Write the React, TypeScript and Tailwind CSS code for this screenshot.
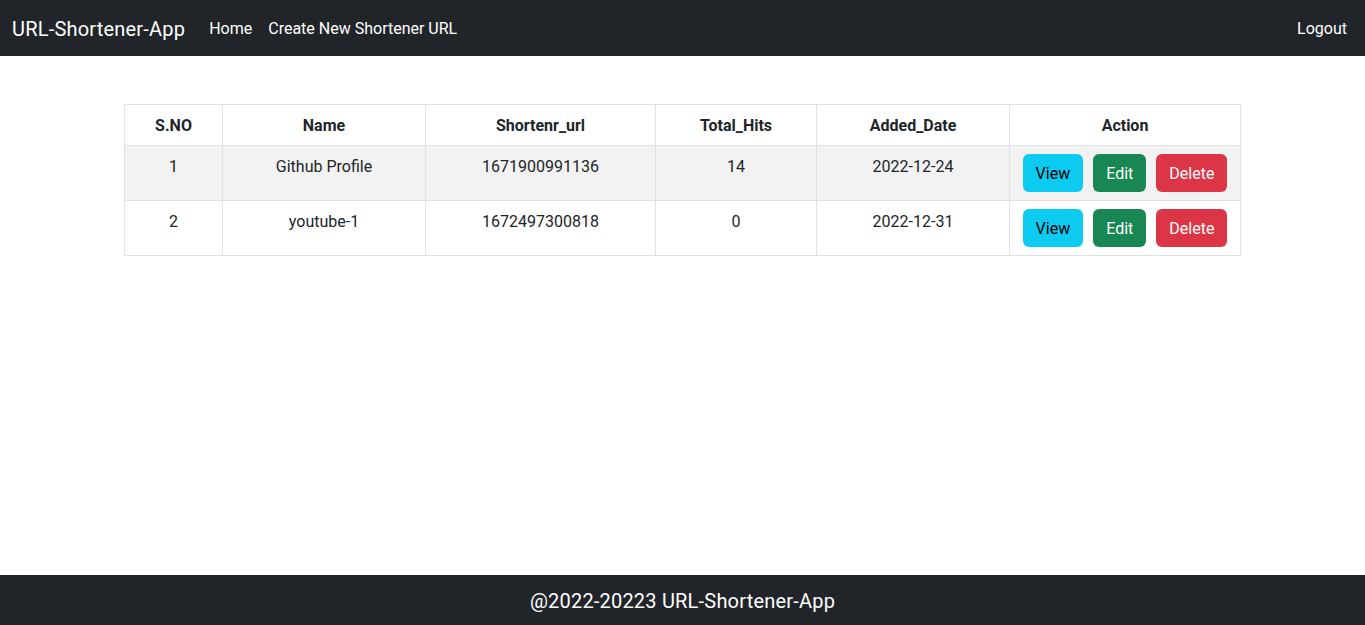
import React from "react";

const rows = [
  { sno: 1, name: "Github Profile", url: "1671900991136", hits: 14, date: "2022-12-24" },
  { sno: 2, name: "youtube-1", url: "1672497300818", hits: 0, date: "2022-12-31" },
];

const headers = [
  { label: "S.NO", w: "w-[98px]" },
  { label: "Name", w: "w-[203px]" },
  { label: "Shortenr_url", w: "w-[230px]" },
  { label: "Total_Hits", w: "w-[161px]" },
  { label: "Added_Date", w: "w-[193px]" },
  { label: "Action", w: "w-[231px]" },
];

export default function App() {
  return (
    <div className="flex min-h-[625px] flex-col bg-white font-['Roboto',sans-serif] text-[#212529]">
      {/* Navbar */}
      <nav className="flex h-14 items-center bg-[#212529] px-3 pt-0.5">
        <span className="mr-4 text-[20px] leading-[30px] tracking-[0.2px] text-white">URL-Shortener-App</span>
        <a className="px-2 text-[16px] text-white">Home</a>
        <a className="px-2 text-[16px] text-white">Create New Shortener URL</a>
        <a className="ml-auto -mr-0.5 px-2 text-[16px] text-white">Logout</a>
      </nav>

      {/* Table */}
      <main className="flex-1">
        <div className="mx-auto mt-12 w-[1141px] px-3">
          <table className="w-full table-fixed border-collapse border border-[#dee2e6] text-[16px] leading-6">
            <thead>
              <tr>
                {headers.map((h) => (
                  <th key={h.label} className={`${h.w} border border-[#dee2e6] px-2 pt-[9px] pb-[7px] text-center font-bold`}>
                    {h.label}
                  </th>
                ))}
              </tr>
            </thead>
            <tbody>
              {rows.map((r, i) => (
                <tr key={r.sno} className={i % 2 === 0 ? "bg-[#f2f2f2]" : "bg-white"}>
                  <td className="border border-[#dee2e6] px-2 pt-[9px] pb-[7px] text-center align-top">{r.sno}</td>
                  <td className="border border-[#dee2e6] px-2 pt-[9px] pb-[7px] text-center align-top">{r.name}</td>
                  <td className="border border-[#dee2e6] px-2 pt-[9px] pb-[7px] text-center align-top">{r.url}</td>
                  <td className="border border-[#dee2e6] px-2 pt-[9px] pb-[7px] text-center align-top">{r.hits}</td>
                  <td className="border border-[#dee2e6] px-2 pt-[9px] pb-[7px] text-center align-top">{r.date}</td>
                  <td className="border border-[#dee2e6] p-2">
                    <div className="flex justify-center gap-2.5">
                      <button className="h-[38px] rounded-md bg-[#0dcaf0] px-[13px] pt-0.5 text-black">View</button>
                      <button className="h-[38px] rounded-md bg-[#198754] px-[13px] pt-0.5 text-white">Edit</button>
                      <button className="h-[38px] rounded-md bg-[#dc3545] px-[13px] pt-0.5 text-white">Delete</button>
                    </div>
                  </td>
                </tr>
              ))}
            </tbody>
          </table>
        </div>
      </main>

      {/* Footer */}
      <footer className="flex h-[50px] items-center justify-center bg-[#212529] pt-0.5 text-[20px] tracking-[0.2px] text-white">
        @2022-20223 URL-Shortener-App
      </footer>
    </div>
  );
}
